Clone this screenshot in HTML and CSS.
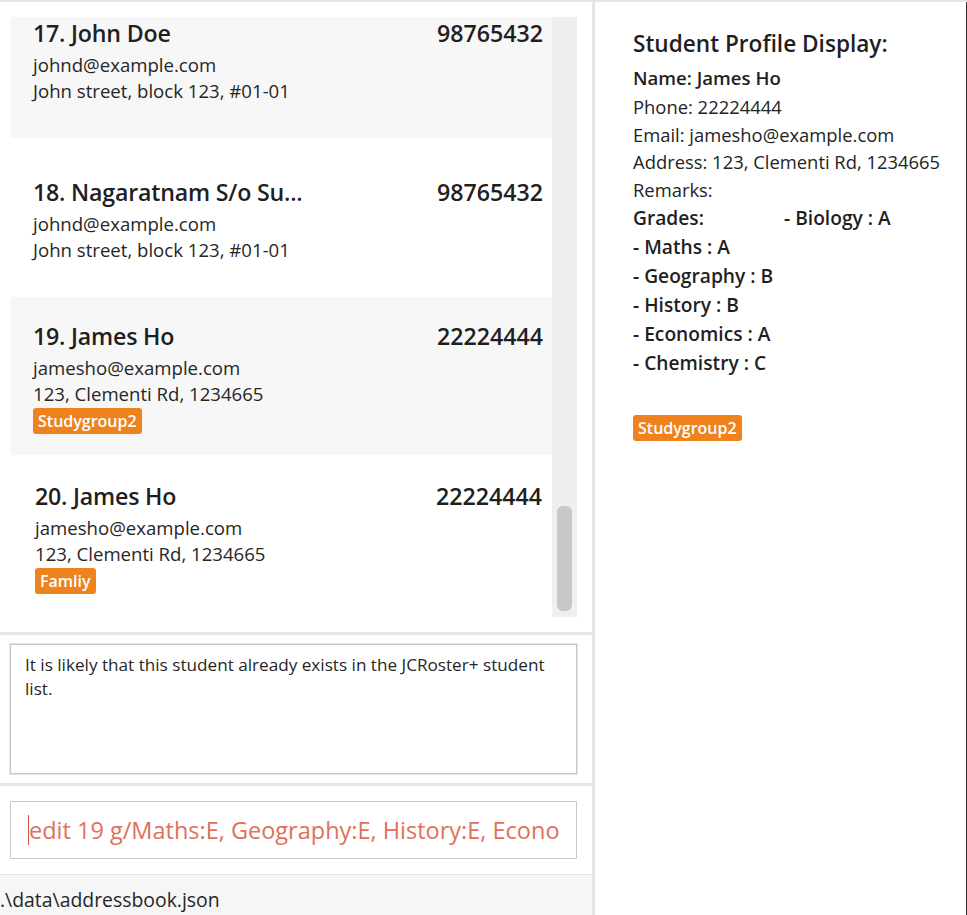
FILE: index.html
```html
<!DOCTYPE html>
<html>
<head>
<meta charset="utf-8">
<link rel="stylesheet" href="styles.css">
</head>
<body>
<div class="app">
  <div class="left">
    <div class="list-section">
      <div class="list-frame">
        <div class="list-viewport">
          <div class="list-inner">
            <div class="card card-alt">
              <div class="card-head"><span class="card-name">17. John Doe</span><span class="card-phone">98765432</span></div>
              <div class="card-line card-email">johnd@example.com</div>
              <div class="card-line">John street, block 123, #01-01</div>
            </div>
            <div class="card card-tall">
              <div class="card-head"><span class="card-name">18. Nagaratnam S/o Su...</span><span class="card-phone">98765432</span></div>
              <div class="card-line card-email">johnd@example.com</div>
              <div class="card-line">John street, block 123, #01-01</div>
            </div>
            <div class="card card-alt card-tagged">
              <div class="card-head"><span class="card-name">19. James Ho</span><span class="card-phone">22224444</span></div>
              <div class="card-line card-email">jamesho@example.com</div>
              <div class="card-line">123, Clementi Rd, 1234665</div>
              <div class="tags"><span class="tag">Studygroup2</span></div>
            </div>
            <div class="card card-shift card-tagged">
              <div class="card-head"><span class="card-name">20. James Ho</span><span class="card-phone">22224444</span></div>
              <div class="card-line card-email">jamesho@example.com</div>
              <div class="card-line">123, Clementi Rd, 1234665</div>
              <div class="tags"><span class="tag">Famliy</span></div>
            </div>
          </div>
        </div>
        <div class="scrollbar"><div class="thumb"></div></div>
      </div>
    </div>
    <div class="result-section">
      <div class="result-box">It is likely that this student already exists in the JCRoster+ student list.</div>
    </div>
    <div class="command-section">
      <div class="command-box"><span class="caret"></span><span class="command-text">edit 19 g/Maths:E, Geography:E, History:E, Economics:E</span></div>
    </div>
    <div class="status-bar">.\data\addressbook.json</div>
  </div>
  <div class="right">
    <div class="profile-title">Student Profile Display:</div>
    <div class="profile-name">Name: James Ho</div>
    <div class="profile-line">Phone: 22224444</div>
    <div class="profile-line">Email: jamesho@example.com</div>
    <div class="profile-line">Address: 123, Clementi Rd, 1234665</div>
    <div class="profile-line">Remarks:</div>
    <div class="grades">
      <div class="grade-line"><span class="grades-label">Grades:</span><span>- Biology : A</span></div>
      <div class="grade-line">- Maths : A</div>
      <div class="grade-line">- Geography : B</div>
      <div class="grade-line">- History : B</div>
      <div class="grade-line">- Economics : A</div>
      <div class="grade-line">- Chemistry : C</div>
    </div>
    <div class="profile-tags"><span class="tag">Studygroup2</span></div>
  </div>
</div>
</body>
</html>
```
FILE: styles.css
```css
* { box-sizing: border-box; }
html, body { margin: 0; padding: 0; background: #fff; }
body {
  font-family: "Open Sans", "Noto Sans", sans-serif;
  color: #232323;
  width: 967px;
  height: 915px;
  overflow: hidden;
}
.app {
  display: flex;
  height: 915px;
  border-top: 2px solid #e4e4e4;
}
.left {
  width: 595px;
  display: flex;
  flex-direction: column;
  border-right: 3px solid #e6e6e6;
}
.list-section {
  padding: 15px 15px 15px 10px;
  border-bottom: 3px solid #e6e6e6;
}
.list-frame {
  display: flex;
  height: 600px;
}
.list-viewport {
  width: 542px;
  overflow: hidden;
}
.list-inner { margin-top: -37px; }
.card {
  height: 158px;
  display: flex;
  flex-direction: column;
  justify-content: center;
  padding: 4px 9px 0 23px;
  background: #fff;
}
.card-tagged { padding-top: 2px; }
.card-tall { height: 159px; }
.card-alt { background: #f7f7f7; }
.card-shift { height: 162px; padding-left: 25px; padding-right: 10px; }
.card-head {
  display: flex;
  justify-content: space-between;
  align-items: baseline;
  font-size: 23.2px;
  font-weight: 600;
  color: #1f1f1f;
  line-height: 30px;
}
.card-name {
  white-space: nowrap;
  letter-spacing: -0.2px;
}
.card-line {
  font-size: 18.6px;
  line-height: 26px;
  color: #262626;
}
.card-email { margin-top: 4px; }
.tags { display: flex; gap: 6px; margin-top: 1px; }
.tag {
  display: inline-block;
  background: #f0821e;
  color: #fff;
  font-weight: 600;
  font-size: 16px;
  line-height: 26px;
  height: 26px;
  padding: 0 5px;
  border-radius: 3px;
}
.scrollbar {
  width: 25px;
  background: #efefef;
  display: flex;
  flex-direction: column;
  justify-content: flex-end;
  padding: 0 5px 6px 5px;
}
.thumb {
  height: 105px;
  background: #c8c8c8;
  border-radius: 6px;
}
.result-section {
  padding: 9px 15px 9px 10px;
  border-bottom: 3px solid #e6e6e6;
}
.result-box {
  height: 130px;
  border: 1px solid #c6c6c6;
  outline: 1px solid #e6e6e6;
  padding: 8px 14px;
  font-size: 17.15px;
  line-height: 24px;
  color: #262626;
}
.command-section {
  padding: 15px 15px 15px 10px;
  border-bottom: 1px solid #e6e6e6;
}
.command-box {
  height: 58px;
  border: 1px solid #c9c9c9;
  display: flex;
  align-items: center;
  padding: 0 16px 0 17px;
  overflow: hidden;
  white-space: nowrap;
}
.caret {
  display: inline-block;
  width: 1px;
  height: 30px;
  background: #d9534f;
  flex: none;
}
.command-text {
  font-size: 23.5px;
  color: #e0705a;
  overflow: hidden;
}
.status-bar {
  flex: 1;
  background: #f6f6f6;
  font-size: 19.4px;
  line-height: 24px;
  padding: 13px 0 0 0;
  color: #262626;
}
.right {
  flex: 1;
  padding: 27px 0 0 38px;
  border-right: 1px solid #333;
}
.profile-title {
  font-size: 22.6px;
  font-weight: 600;
  line-height: 30px;
  color: #1f1f1f;
  margin-bottom: 4px;
}
.profile-name {
  font-size: 18.6px;
  font-weight: 600;
  line-height: 30px;
  color: #1f1f1f;
}
.profile-line {
  font-size: 18.4px;
  line-height: 27.5px;
}
.grades { font-weight: 600; font-size: 19.2px; color: #1f1f1f; }
.grade-line { line-height: 29px; }
.grades-label { display: inline-block; width: 151px; }
.profile-tags { margin-top: 38px; }
```
